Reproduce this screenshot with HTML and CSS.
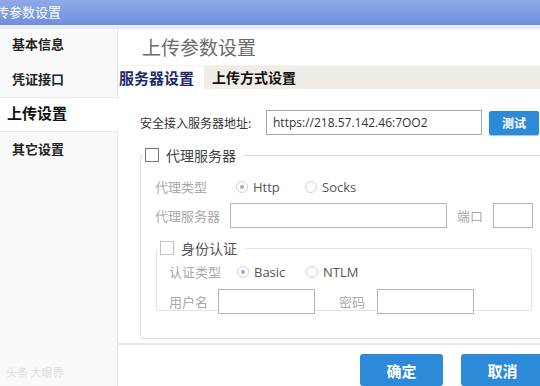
FILE: index.html
```html
<!DOCTYPE html>
<html lang="zh-CN">
<head>
    <meta charset="UTF-8">
    <title>上传参数设置</title>
    <link rel="stylesheet" href="styles.css">
</head>
<body>
    <div class="window">
        <div class="titlebar"><span class="title">上传参数设置</span></div>
        <div class="main">
            <!-- 左侧菜单 -->
            <div class="nav">
                <div class="nav-item">基本信息</div>
                <div class="nav-item">凭证接口</div>
                <div class="nav-item active">上传设置</div>
                <div class="nav-item">其它设置</div>
                <div class="nav-rest">
                    <span class="mark">头条 大眼界</span>
                </div>
            </div>

            <!-- 右侧内容 -->
            <div class="content">
                <h1>上传参数设置</h1>
                <div class="tabs">
                    <div class="tab active">服务器设置</div>
                    <div class="tab">上传方式设置</div>
                </div>

                <div class="panel">
                    <div class="row server-row">
                        <label>安全接入服务器地址:</label>
                        <input type="text" class="text url" value="https://218.57.142.46:7OO2">
                        <button class="btn small">测试</button>
                    </div>

                    <fieldset class="group proxy">
                        <legend><span class="box"></span>代理服务器</legend>
                        <div class="row dim">
                            <span class="lbl">代理类型</span>
                            <span class="radio on"></span><span class="opt">Http</span>
                            <span class="radio"></span><span class="opt">Socks</span>
                        </div>
                        <div class="row dim">
                            <span class="lbl short">代理服务器</span>
                            <span class="text host"></span>
                            <span class="lbl port-lbl">端口</span>
                            <span class="text port"></span>
                        </div>

                        <fieldset class="group auth">
                            <legend><span class="box light"></span>身份认证</legend>
                            <div class="row dim">
                                <span class="lbl">认证类型</span>
                                <span class="radio on"></span><span class="opt">Basic</span>
                                <span class="radio"></span><span class="opt">NTLM</span>
                            </div>
                            <div class="row dim">
                                <span class="lbl short">用户名</span>
                                <span class="text user"></span>
                                <span class="lbl pwd-lbl">密码</span>
                                <span class="text pwd"></span>
                            </div>
                        </fieldset>
                    </fieldset>
                </div>

                <div class="footer">
                    <button class="btn big">确定</button>
                    <button class="btn big">取消</button>
                </div>
            </div>
        </div>
    </div>
</body>
</html>
```

FILE: styles.css
```css
body {
    margin: 0;
    font-family: "Noto Sans", "Noto Sans CJK SC", sans-serif;
    background: #fff;
}
.window {
    width: 540px;
    height: 386px;
    overflow: hidden;
    display: flex;
    flex-direction: column;
}
.titlebar {
    height: 25px;
    background: linear-gradient(#8eaae9, #6e8fdc);
    border-bottom: 4px solid #e9ebef;
    flex-shrink: 0;
    overflow: hidden;
}
.title {
    display: block;
    margin-left: -17px;
    line-height: 24px;
    font-size: 13px;
    color: #fff;
    font-family: "Noto Sans CJK SC", sans-serif;
}
.main {
    flex: 1;
    display: flex;
    min-height: 0;
}

/* 左侧菜单 */
.nav {
    width: 118px;
    flex-shrink: 0;
    display: flex;
    flex-direction: column;
    background: #f9f9f9;
}
.nav-item {
    height: 32px;
    line-height: 30px;
    padding-left: 12px;
    font-size: 13px;
    font-weight: bold;
    color: #222;
    font-family: "Noto Sans CJK SC", sans-serif;
    border-right: 1px solid #e4e4e4;
}
.nav-item:nth-child(2) {
    height: 36px;
    line-height: 36px;
    border-bottom: 1px solid #e8e8e8;
}
.nav-item.active {
    height: 33px;
    line-height: 29px;
    background: #fff;
    border-right: 1px solid #fff;
    border-bottom: 1px solid #e8e8e8;
    padding-left: 7px;
    font-size: 15px;
    color: #111;
}
.nav-item:nth-child(4) {
    height: 36px;
    line-height: 34px;
}
.nav-rest {
    flex: 1;
    border-right: 1px solid #e4e4e4;
    position: relative;
}
.mark {
    position: absolute;
    left: 6px;
    bottom: 6px;
    font-size: 11px;
    color: #dedede;
    font-family: "Noto Sans CJK SC", sans-serif;
}

/* 右侧内容 */
.content {
    flex: 1;
    min-width: 0;
    overflow: hidden;
    display: flex;
    flex-direction: column;
}
.content h1 {
    margin: 0;
    height: 40px;
    line-height: 36px;
    padding-left: 24px;
    font-size: 19px;
    font-weight: normal;
    color: #6a6a6a;
    font-family: "Noto Sans CJK SC", sans-serif;
}
.tabs {
    display: flex;
    height: 23px;
    background: #efede5;
    border-top: 1px solid #f4f3ee;
}
.tab {
    line-height: 23px;
    font-size: 14px;
    font-weight: bold;
    color: #111;
    font-family: "Noto Sans CJK SC", sans-serif;
    padding: 0 8px;
}
.tab.active {
    background: #fff;
    color: #1c2a6a;
    font-size: 15px;
    padding: 0 10px 0 1px;
}
.panel {
    padding: 21px 0 0 22px;
    height: 233px;
    flex-shrink: 0;
    border-bottom: 2px solid #e8e8e8;
    font-size: 12px;
}
.row {
    display: flex;
    align-items: center;
}
.server-row label {
    width: 126px;
    color: #333;
    font-size: 12px;
    font-family: "Noto Sans CJK SC", sans-serif;
}
.text {
    box-sizing: border-box;
    height: 25px;
    border: 1px solid #a9a9a9;
    background: #fff;
    display: block;
    flex-shrink: 0;
}
input.url {
    width: 216px;
    padding: 0 6px;
    font-size: 12px;
    color: #333;
    font-family: "Open Sans", "Noto Sans", sans-serif;
    outline: none;
}
.btn {
    border: none;
    background: #2c8ad9;
    color: #fff;
    font-weight: bold;
    font-family: "Noto Sans CJK SC", sans-serif;
    cursor: pointer;
    flex-shrink: 0;
}
.btn.small {
    margin-left: 7px;
    width: 50px;
    height: 24px;
    font-size: 12px;
    border-radius: 2px;
    box-shadow: 0 1px 1px #9bc4ea;
}

/* 分组框 */
.group {
    border: 1px solid #dcdcdc;
    border-radius: 3px;
    margin: 0;
    padding: 0;
}
.group legend {
    display: flex;
    align-items: center;
    padding: 0 8px 0 2px;
    font-size: 14px;
    color: #444;
    font-family: "Noto Sans CJK SC", sans-serif;
}
.box {
    width: 12px;
    height: 12px;
    border: 1px solid #777;
    margin-right: 7px;
    background: #fff;
}
.box.light {
    border-color: #c4c4c4;
}
.proxy {
    margin-top: 10px;
    width: 440px;
    height: 192px;
    border-right: none;
}
.proxy > legend {
    margin-left: 2px;
}
.dim {
    color: #a9a9a9;
    font-family: "Noto Sans CJK SC", sans-serif;
    font-size: 13px;
}
.dim .opt {
    width: 52px;
    color: #555;
    font-family: "Open Sans", "Noto Sans", sans-serif;
    font-size: 13px;
}
.proxy > .row {
    padding-left: 14px;
}
.proxy > .row:first-of-type {
    margin-top: 12px;
}
.proxy > .row + .row {
    margin-top: 7px;
}
.lbl {
    width: 81px;
    flex-shrink: 0;
}
.lbl.short {
    width: 75px;
}
.radio {
    box-sizing: border-box;
    width: 12px;
    height: 12px;
    border: 1px solid #d0d0d0;
    border-radius: 50%;
    margin-right: 5px;
    display: flex;
    align-items: center;
    justify-content: center;
    flex-shrink: 0;
}
.radio.on::after {
    content: "";
    width: 4px;
    height: 4px;
    border-radius: 50%;
    background: #aaa;
}
.text.host {
    width: 217px;
    border-color: #b5b5b5;
}
.lbl.port-lbl {
    width: auto;
    margin: 0 10px;
}
.text.port {
    width: 40px;
    border-color: #b5b5b5;
}

.auth {
    margin: 10px 0 0 15px;
    width: 374px;
    height: 71px;
    border-color: #e2e2e2;
}
.auth > legend {
    margin-left: 1px;
    color: #555;
}
.auth > .row {
    padding-left: 12px;
}
.auth > .row:first-of-type {
    margin-top: 4px;
}
.auth > .row + .row {
    margin-top: 8px;
}
.auth .lbl {
    width: 68px;
}
.auth .lbl.short {
    width: 49px;
}
.text.user {
    width: 97px;
    border-color: #b5b5b5;
}
.auth .lbl.pwd-lbl {
    width: auto;
    margin: 0 12px 0 24px;
}
.text.pwd {
    width: 97px;
    border-color: #b5b5b5;
}

.footer {
    flex: 1;
    display: flex;
    justify-content: flex-end;
    align-items: flex-start;
    padding-top: 9px;
    gap: 18px;
}
.btn.big {
    width: 83px;
    height: 32px;
    font-size: 15px;
    border-radius: 3px;
}
.btn.big:last-child {
    margin-right: -4px;
}
```
